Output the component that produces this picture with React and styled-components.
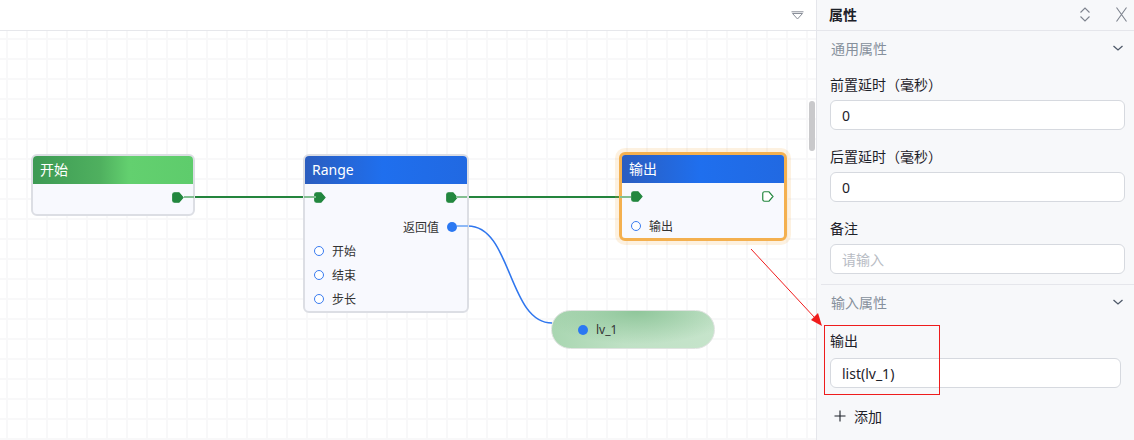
import React from 'react'
import styled, { createGlobalStyle } from 'styled-components'

const Global = createGlobalStyle`
  html, body { margin: 0; padding: 0; background: #fff; }
  body { font-family: "Noto Sans", "Noto Sans CJK SC", sans-serif; }
  * { box-sizing: border-box; }
`

const Shell = styled.div`
  position: relative;
  display: flex;
  width: 1134px;
  height: 440px;
  overflow: hidden;
`

const Canvas = styled.div`
  position: relative;
  flex: 1;
  display: flex;
  flex-direction: column;
  background: #fff;
`

const Toolbar = styled.div`
  height: 31px;
  display: flex;
  align-items: center;
  justify-content: flex-end;
  padding-right: 12px;
  border-bottom: 1px solid #e6e7eb;
`

const Board = styled.div`
  position: relative;
  flex: 1;
  background-color: #fff;
  background-image:
    linear-gradient(to right, #f8f8f9 2px, transparent 2px),
    linear-gradient(to bottom, #f8f8f9 2px, transparent 2px);
  background-size: 20px 20px;
  background-position: 6px 7px;
`

const Scroll = styled.div`
  position: absolute;
  right: 1px;
  top: 101px;
  width: 6px;
  height: 50px;
  border-radius: 3px;
  background: #c9c9cb;
`

const Node = styled.div`
  position: absolute;
  left: ${p => p.$x}px;
  top: ${p => p.$y}px;
  width: ${p => p.$w}px;
  background: #f8f9fe;
  border: ${p => (p.$selected ? '3px solid #f4b04f' : '2px solid #dcdee4')};
  border-radius: 6px;
  box-shadow: ${p => (p.$selected ? '0 0 0 4px rgba(245, 178, 83, 0.18)' : 'none')};
  overflow: hidden;
`

const Header = styled.div`
  height: 28px;
  display: flex;
  align-items: center;
  padding-left: 7px;
  padding-bottom: 2px;
  color: #fff;
  font-size: 14px;
  background: ${p =>
    p.$tone === 'green'
      ? 'linear-gradient(90deg, #3d9a54 0%, #4fb05f 42%, #63d06f 60%, #5ecc6c 100%)'
      : 'linear-gradient(90deg, #2b5dbf 0%, #1f6fee 48%, #2169e2 100%)'};
`

const Body = styled.div`
  padding-top: 2px;
`

const PortRow = styled.div`
  height: 22px;
  margin-bottom: 6px;
  display: flex;
  align-items: center;
  justify-content: space-between;
  padding: 0 ${p => p.$pr || 9}px 0 9px;
`

const DataList = styled.div`
  padding-top: 1px;
`

const DataRow = styled.div`
  height: 24px;
  display: flex;
  align-items: center;
  justify-content: ${p => (p.$out ? 'flex-end' : 'flex-start')};
  gap: 8px;
  padding: 0 ${p => (p.$out ? 10 : 9)}px;
  font-size: 12px;
  color: #333;
`

const Hollow = styled.span`
  width: 10px;
  height: 10px;
  border-radius: 50%;
  border: 1.5px solid #3a7cf0;
  background: #fff;
`

const Dot = styled.span`
  width: 10px;
  height: 10px;
  border-radius: 50%;
  background: #2b78f2;
`

const Pill = styled.div`
  position: absolute;
  left: 551px;
  top: 279px;
  width: 164px;
  height: 39px;
  border-radius: 20px;
  border: 1px solid #dfe3e0;
  background:
    radial-gradient(ellipse 60% 90% at 52% 0%, #8fc69a 0%, rgba(143, 198, 154, 0) 100%),
    linear-gradient(90deg, #a9d6b1 0%, #bfe1c5 45%, #c6e4cb 100%);
  display: flex;
  align-items: center;
  gap: 8px;
  padding-left: 26px;
  font-size: 12px;
  color: #333;
`

const Wires = styled.svg`
  position: absolute;
  left: 0;
  top: 0;
  width: 816px;
  height: 409px;
  pointer-events: none;
`

const Panel = styled.aside`
  width: 318px;
  background: #f7f8fa;
  border-left: 1px solid #e5e6eb;
  display: flex;
  flex-direction: column;
  font-family: "Noto Sans CJK SC", "Noto Sans", sans-serif;
`

const PanelHead = styled.div`
  height: 31px;
  display: flex;
  align-items: center;
  padding: 0 7px 2px 12px;
  border-bottom: 1px solid #e5e6eb;
  font-size: 14px;
  font-weight: 700;
  color: #1d2129;
`

const HeadTitle = styled.span`
  flex: 1;
`

const HeadIcons = styled.div`
  display: flex;
  align-items: center;
  gap: 25px;
`

const Section = styled.section`
  border-top: ${p => (p.$divided ? '1px solid #e5e6eb' : 'none')};
  margin-left: ${p => (p.$divided ? 4 : 0)}px;
  padding-left: ${p => (p.$divided ? 9 : 13)}px;
  padding-right: 9px;
  padding-bottom: ${p => p.$pb || 0}px;
`

const SectionHead = styled.div`
  height: 36px;
  display: flex;
  align-items: center;
  justify-content: space-between;
  padding: 0 1px 2px 1px;
  font-size: 14px;
  color: #86909c;
`

const Fields = styled.div`
  display: flex;
  flex-direction: column;
  gap: 16px;
  padding-top: ${p => p.$pt || 7}px;
`

const Field = styled.div`
  display: flex;
  flex-direction: column;
  gap: ${p => p.$gap || 6}px;
  padding-right: ${p => p.$inset || 0}px;
`

const Label = styled.div`
  height: 20px;
  line-height: 20px;
  font-size: 14px;
  color: #1d2129;
`

const Input = styled.div`
  height: 30px;
  display: flex;
  align-items: center;
  padding-left: 11px;
  background: #fff;
  border: 1px solid #d6d9df;
  border-radius: 6px;
  font-size: 14px;
  font-family: "Noto Sans", "Noto Sans CJK SC", sans-serif;
  color: ${p => (p.$placeholder ? '#b8bcc4' : '#1d2129')};
`

const AddRow = styled.div`
  display: flex;
  align-items: center;
  gap: 8px;
  height: 20px;
  margin-top: 18px;
  padding-left: 4px;
  font-size: 14px;
  color: #1d2129;
`

const Marker = styled.div`
  position: absolute;
  left: 824px;
  top: 325px;
  width: 116px;
  height: 70px;
  border: 1px solid #ee1c1c;
  pointer-events: none;
`

const Arrow = styled.svg`
  position: absolute;
  left: 0;
  top: 0;
  width: 1134px;
  height: 440px;
  pointer-events: none;
`

function Pin({ hollow }) {
  return (
    <svg width="12" height="11" viewBox="0 0 12 11">
      <path
        d="M2.5 0.75 H7 L11 5.5 L7 10.25 H2.5 Q0.75 10.25 0.75 8.5 V2.5 Q0.75 0.75 2.5 0.75 Z"
        fill={hollow ? '#fff' : '#23873f'}
        stroke="#23873f"
        strokeWidth="1.2"
      />
    </svg>
  )
}

function Chevron() {
  return (
    <svg width="12" height="8" viewBox="0 0 12 8">
      <path d="M1.5 2 L6 6 L10.5 2" fill="none" stroke="#4e5969" strokeWidth="1.3" />
    </svg>
  )
}

export default function App() {
  return (
    <Shell>
      <Global />
      <Canvas>
        <Toolbar>
          <svg width="13" height="9" viewBox="0 0 13 9">
            <path d="M0.5 0.8 H12.5" stroke="#8a8f99" strokeWidth="1" />
            <path d="M1.5 2.5 H11.5 L6.5 8 Z" fill="none" stroke="#8a8f99" strokeWidth="1" />
          </svg>
        </Toolbar>
        <Board>
          <Wires viewBox="0 0 816 409">
            <path d="M194 166 H304" stroke="#23843c" strokeWidth="2" />
            <path d="M467 166 H620" stroke="#23843c" strokeWidth="2" />
            <path d="M468 195 C512 195, 508 292, 552 292" fill="none" stroke="#2f76ee" strokeWidth="1.6" />
          </Wires>

          <Node $x={31} $y={123} $w={164}>
            <Header $tone="green">开始</Header>
            <Body>
              <PortRow>
                <span />
                <Pin />
              </PortRow>
            </Body>
          </Node>

          <Node $x={303} $y={123} $w={166}>
            <Header $tone="blue">Range</Header>
            <Body>
              <PortRow>
                <Pin />
                <Pin />
              </PortRow>
              <DataList>
                <DataRow $out>
                  返回值
                  <Dot />
                </DataRow>
                <DataRow><Hollow />开始</DataRow>
                <DataRow><Hollow />结束</DataRow>
                <DataRow><Hollow />步长</DataRow>
              </DataList>
            </Body>
          </Node>

          <Node $x={619} $y={121} $w={168} $selected>
            <Header $tone="blue">输出</Header>
            <Body>
              <PortRow $pr={10}>
                <Pin />
                <Pin hollow />
              </PortRow>
              <DataList>
                <DataRow><Hollow />输出</DataRow>
              </DataList>
            </Body>
          </Node>

          <Wires viewBox="0 0 816 409">
            <path d="M184 166 H194" stroke="#83bf92" strokeWidth="2" />
            <path d="M304 166 H316" stroke="#83bf92" strokeWidth="2" />
            <path d="M456 166 H467" stroke="#83bf92" strokeWidth="2" />
            <path d="M620 166 H631" stroke="#83bf92" strokeWidth="2" />
            <path d="M457 195 H468" stroke="#8db8f6" strokeWidth="2" />
          </Wires>

          <Pill>
            <Dot />
            lv_1
          </Pill>
        </Board>
        <Scroll />
      </Canvas>

      <Panel>
        <PanelHead>
          <HeadTitle>属性</HeadTitle>
          <HeadIcons>
            <svg width="12" height="15" viewBox="0 0 12 15">
              <path d="M1.5 5.5 L6 1 L10.5 5.5" fill="none" stroke="#7d838e" strokeWidth="1.1" />
              <path d="M1.5 9.5 L6 14 L10.5 9.5" fill="none" stroke="#7d838e" strokeWidth="1.1" />
            </svg>
            <svg width="11" height="15" viewBox="0 0 11 15">
              <path d="M0.5 0.5 L10.5 14.5 M10.5 0.5 L0.5 14.5" stroke="#7d838e" strokeWidth="1.1" />
            </svg>
          </HeadIcons>
        </PanelHead>

        <Section $pb={10}>
          <SectionHead>
            通用属性
            <Chevron />
          </SectionHead>
          <Fields>
            <Field>
              <Label>前置延时（毫秒）</Label>
              <Input>0</Input>
            </Field>
            <Field>
              <Label>后置延时（毫秒）</Label>
              <Input>0</Input>
            </Field>
            <Field>
              <Label>备注</Label>
              <Input $placeholder>请输入</Input>
            </Field>
          </Fields>
        </Section>

        <Section $divided>
          <SectionHead>
            输入属性
            <Chevron />
          </SectionHead>
          <Fields $pt={9}>
            <Field $gap={8} $inset={4}>
              <Label>输出</Label>
              <Input>list(lv_1)</Input>
            </Field>
          </Fields>
          <AddRow>
            <svg width="12" height="12" viewBox="0 0 12 12">
              <path d="M6 0.5 V11.5 M0.5 6 H11.5" stroke="#1d2129" strokeWidth="1.1" />
            </svg>
            添加
          </AddRow>
        </Section>
      </Panel>

      <Marker />
      <Arrow viewBox="0 0 1134 440">
        <path d="M751 249 L815 318" stroke="#f01c1c" strokeWidth="1" />
        <path d="M822 326 L811 320 L818 313 Z" fill="#f01c1c" />
      </Arrow>
    </Shell>
  )
}
